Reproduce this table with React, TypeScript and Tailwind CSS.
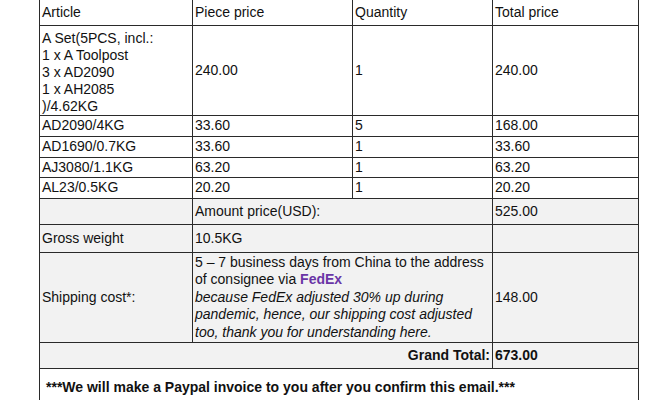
import React from "react";

const cell = "border border-[#2a2a2a] px-[2px] align-middle";

export default function App() {
  return (
    <div className="w-[656px] h-[400px] overflow-hidden bg-white" style={{ fontFamily: '"Liberation Sans", Arial, sans-serif' }}>
      <table className="ml-[39px] -mt-[1px] w-[599px] border-collapse table-fixed text-[14px] leading-[17.5px] text-[#111]">
        <colgroup>
          <col className="w-[153px]" />
          <col className="w-[160px]" />
          <col className="w-[140px]" />
          <col className="w-[146px]" />
        </colgroup>
        <tbody>
          <tr className="h-[26px]">
            <td className={cell}>Article</td>
            <td className={cell}>Piece price</td>
            <td className={cell}>Quantity</td>
            <td className={cell}>Total price</td>
          </tr>
          <tr className="h-[90px]">
            <td className={`${cell} pt-[3px] pb-0 leading-[17px]`}>
              A Set(5PCS, incl.:<br />1 x A Toolpost<br />3 x AD2090<br />1 x AH2085<br />)/4.62KG
            </td>
            <td className={cell}>240.00</td>
            <td className={cell}>1</td>
            <td className={cell}>240.00</td>
          </tr>
          <tr className="h-[21px]">
            <td className={cell}>AD2090/4KG</td>
            <td className={cell}>33.60</td>
            <td className={cell}>5</td>
            <td className={cell}>168.00</td>
          </tr>
          <tr className="h-[21px]">
            <td className={cell}>AD1690/0.7KG</td>
            <td className={cell}>33.60</td>
            <td className={cell}>1</td>
            <td className={cell}>33.60</td>
          </tr>
          <tr className="h-[20px]">
            <td className={cell}>AJ3080/1.1KG</td>
            <td className={cell}>63.20</td>
            <td className={cell}>1</td>
            <td className={cell}>63.20</td>
          </tr>
          <tr className="h-[21px]">
            <td className={cell}>AL23/0.5KG</td>
            <td className={cell}>20.20</td>
            <td className={cell}>1</td>
            <td className={cell}>20.20</td>
          </tr>
          <tr className="h-[26px] bg-[#f2f2f2]">
            <td className={cell}></td>
            <td className={cell} colSpan={2}>Amount price(USD):</td>
            <td className={cell}>525.00</td>
          </tr>
          <tr className="h-[28px] bg-[#f2f2f2]">
            <td className={cell}>Gross weight</td>
            <td className={cell} colSpan={2}>10.5KG</td>
            <td className={cell}></td>
          </tr>
          <tr className="h-[90px] bg-[#f2f2f2]">
            <td className={cell}>Shipping cost*:</td>
            <td className={`${cell} py-0`} colSpan={2}>
              5 – 7 business days from China to the address<br />
              of consignee via <span className="font-bold text-[#6a35a6]">FedEx</span>
              <br />
              <span className="italic">
                because FedEx adjusted 30% up during<br />
                pandemic, hence, our shipping cost adjusted<br />
                too, thank you for understanding here.
              </span>
            </td>
            <td className={cell}>148.00</td>
          </tr>
          <tr className="h-[26px] bg-[#f2f2f2]">
            <td className={`${cell} text-right font-bold`} colSpan={3}>Grand Total:</td>
            <td className={`${cell} font-bold`}>673.00</td>
          </tr>
          <tr className="h-[44px]">
            <td className={`${cell} pl-[6px] pb-[6px] font-bold`} colSpan={4}>
              ***We will make a Paypal invoice to you after you confirm this email.***
            </td>
          </tr>
        </tbody>
      </table>
    </div>
  );
}
